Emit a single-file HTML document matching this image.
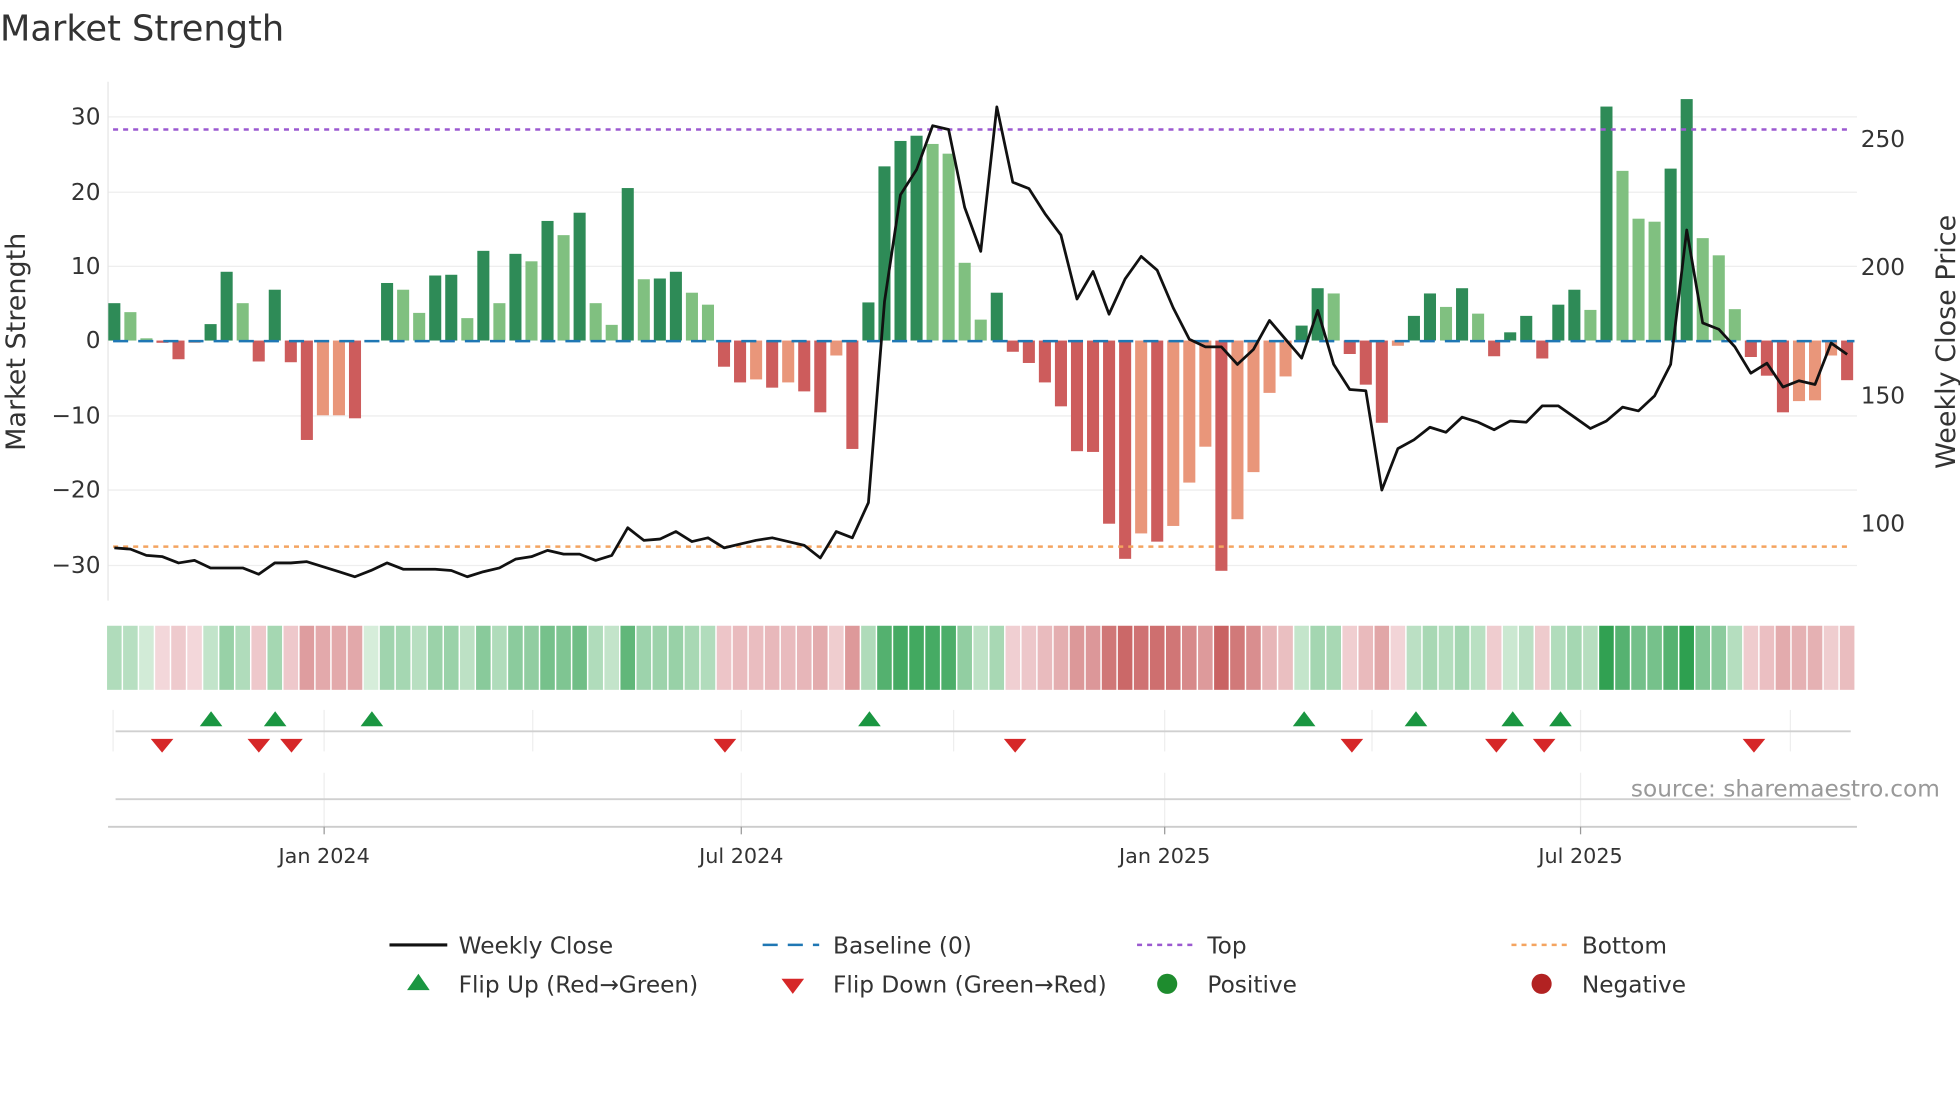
<!DOCTYPE html>
<html><head><meta charset="utf-8">
<style>
html,body{margin:0;padding:0;background:#fff;width:1960px;height:1102px;overflow:hidden}
svg{display:block}
text{font-family:"DejaVu Sans","Liberation Sans",sans-serif}
</style></head>
<body>
<svg id="s" width="1960" height="1102" viewBox="0 0 1560 877" xmlns="http://www.w3.org/2000/svg">
<text x="0" y="32" font-size="28" fill="#333">Market Strength</text>
<g stroke="#eeeeee" stroke-width="1">
<line x1="86" x2="1478" y1="93" y2="93"/><line x1="86" x2="1478" y1="153" y2="153"/>
<line x1="86" x2="1478" y1="212" y2="212"/><line x1="86" x2="1478" y1="331" y2="331"/>
<line x1="86" x2="1478" y1="390" y2="390"/><line x1="86" x2="1478" y1="450" y2="450"/>
</g>
<line x1="86" x2="86" y1="65" y2="478" stroke="#e6e6e6" stroke-width="1"/>
<g font-size="18.5" fill="#333" text-anchor="end">
<text x="80" y="99">30</text><text x="80" y="159">20</text><text x="80" y="218">10</text>
<text x="80" y="277">0</text><text x="80" y="337">−10</text><text x="80" y="396">−20</text><text x="80" y="456">−30</text>
</g>
<g font-size="18.5" fill="#333">
<text x="1481" y="117">250</text><text x="1481" y="219">200</text><text x="1481" y="321">150</text><text x="1481" y="423">100</text>
</g>
<text transform="translate(20,272) rotate(-90)" font-size="21.5" fill="#333" text-anchor="middle">Market Strength</text>
<text transform="translate(1556,272) rotate(-90)" font-size="21.5" fill="#333" text-anchor="middle">Weekly Close Price</text>
<g id="bars"></g>
<line x1="90" x2="1476" y1="271.5" y2="271.5" stroke="#1f77b4" stroke-width="2" stroke-dasharray="12 8"/>
<line x1="90" x2="1470" y1="103" y2="103" stroke="#9b59d0" stroke-width="2" stroke-dasharray="4 4"/>
<line x1="90" x2="1470" y1="435" y2="435" stroke="#f4a460" stroke-width="2" stroke-dasharray="4 4"/>
<polyline id="price" fill="none" stroke="#111" stroke-width="2.2" stroke-linejoin="round"/>
<g id="heat"></g>
<g stroke="#eeeeee" stroke-width="1">
<line x1="90" x2="90" y1="565" y2="598"/><line x1="258" x2="258" y1="565" y2="598"/><line x1="424" x2="424" y1="565" y2="598"/>
<line x1="590" x2="590" y1="565" y2="598"/><line x1="759" x2="759" y1="565" y2="598"/><line x1="927" x2="927" y1="565" y2="598"/>
<line x1="1092" x2="1092" y1="565" y2="598"/><line x1="1258" x2="1258" y1="565" y2="598"/><line x1="1425" x2="1425" y1="565" y2="598"/>
<line x1="258" x2="258" y1="615" y2="658"/><line x1="590" x2="590" y1="615" y2="658"/><line x1="927" x2="927" y1="615" y2="658"/><line x1="1258" x2="1258" y1="615" y2="658"/>
</g>
<line x1="92" x2="1473" y1="582" y2="582" stroke="#d0d0d0" stroke-width="1.5"/>
<line x1="92" x2="1473" y1="636" y2="636" stroke="#d0d0d0" stroke-width="1.5"/>
<line x1="86" x2="1478" y1="658" y2="658" stroke="#ccc" stroke-width="1.5"/>
<g stroke="#999" stroke-width="1"><line x1="258" x2="258" y1="658" y2="664"/><line x1="590" x2="590" y1="658" y2="664"/><line x1="927" x2="927" y1="658" y2="664"/><line x1="1258" x2="1258" y1="658" y2="664"/></g>
<g id="flips"></g>
<g font-size="16.5" fill="#333" text-anchor="middle">
<text x="258" y="687">Jan 2024</text><text x="590" y="687">Jul 2024</text><text x="927" y="687">Jan 2025</text><text x="1258" y="687">Jul 2025</text>
</g>
<text x="1544" y="634" font-size="18.5" fill="#999" text-anchor="end">source: sharemaestro.com</text>
<g font-size="18.5" fill="#333">
<line x1="310" x2="356" y1="752" y2="752" stroke="#111" stroke-width="2.5"/><text x="365" y="759">Weekly Close</text>
<line x1="607" x2="652" y1="752" y2="752" stroke="#1f77b4" stroke-width="2" stroke-dasharray="12 8"/><text x="663" y="759">Baseline (0)</text>
<line x1="905" x2="950" y1="752" y2="752" stroke="#9b59d0" stroke-width="2" stroke-dasharray="4 4"/><text x="961" y="759">Top</text>
<line x1="1203" x2="1248" y1="752" y2="752" stroke="#f4a460" stroke-width="2" stroke-dasharray="4 4"/><text x="1259" y="759">Bottom</text>
<polygon points="324,788 342,788 333,775" fill="#1a9641"/><text x="365" y="790">Flip Up (Red→Green)</text>
<polygon points="622,779 640,779 631,791" fill="#d62728"/><text x="663" y="790">Flip Down (Green→Red)</text>
<circle cx="929" cy="783" r="8" fill="#1e8c2e"/><text x="961" y="790">Positive</text>
<circle cx="1227" cy="783" r="8" fill="#b22222"/><text x="1259" y="790">Negative</text>
</g>
</svg>
<script>
var V=[[5,'d'],[3.8,'l'],[0.3,'l'],[-0.3,'r'],[-2.5,'r'],[-0.3,'s'],[2.2,'d'],[9.2,'d'],[5,'l'],[-2.8,'r'],[6.8,'d'],[-2.9,'r'],[-13.3,'r'],[-10,'s'],[-10,'s'],[-10.4,'r'],[0,'d'],[7.7,'d'],[6.8,'l'],[3.7,'l'],[8.7,'d'],[8.8,'d'],[3,'l'],[12,'d'],[5,'l'],[11.6,'d'],[10.6,'l'],[16,'d'],[14.1,'l'],[17.1,'d'],[5,'l'],[2.1,'l'],[20.4,'d'],[8.2,'l'],[8.3,'d'],[9.2,'d'],[6.4,'l'],[4.8,'l'],[-3.5,'r'],[-5.6,'r'],[-5.2,'s'],[-6.3,'r'],[-5.6,'s'],[-6.8,'r'],[-9.6,'r'],[-2,'s'],[-14.5,'r'],[5.1,'d'],[23.3,'d'],[26.7,'d'],[27.4,'d'],[26.3,'l'],[25,'l'],[10.4,'l'],[2.8,'l'],[6.4,'d'],[-1.5,'r'],[-3,'r'],[-5.6,'r'],[-8.8,'r'],[-14.8,'r'],[-14.9,'r'],[-24.5,'r'],[-29.2,'r'],[-25.8,'s'],[-26.9,'r'],[-24.8,'s'],[-19,'s'],[-14.2,'s'],[-30.8,'r'],[-23.9,'s'],[-17.6,'s'],[-7,'s'],[-4.8,'s'],[2,'d'],[7,'d'],[6.3,'l'],[-1.8,'r'],[-5.9,'r'],[-11,'r'],[-0.7,'s'],[3.3,'d'],[6.3,'d'],[4.5,'l'],[7,'d'],[3.6,'l'],[-2.1,'r'],[1.1,'d'],[3.3,'d'],[-2.4,'r'],[4.8,'d'],[6.8,'d'],[4.1,'l'],[31.3,'d'],[22.7,'l'],[16.3,'l'],[15.9,'l'],[23,'d'],[32.3,'d'],[13.7,'l'],[11.4,'l'],[4.2,'l'],[-2.2,'r'],[-4.7,'r'],[-9.6,'r'],[-8.1,'s'],[-8,'s'],[-2,'s'],[-5.3,'r']];
var P=[436,437,442,443,448,446,452,452,452,457,448,448,447,451,455,459,454,448,453,453,453,454,459,455,452,445,443,438,441,441,446,442,420,430,429,423,431,428,436,433,430,428,431,434,444,423,428,400,240,155,135,100,103,165,200,85,145,150,170,187,238,216,250,222,204,215,245,270,276,276,290,278,255,270,285,247,290,310,311,390,357,350,340,344,332,336,342,335,336,323,323,332,341,335,324,327,315,290,183,257,262,276,297,289,308,303,306,273,282];
var C={d:'#2e8b57',l:'#80c080',r:'#cd5c5c',s:'#e9967a'};
var NS='http://www.w3.org/2000/svg';
function el(t,a,p){var e=document.createElementNS(NS,t);for(var k in a)e.setAttribute(k,a[k]);document.getElementById(p).appendChild(e);}
function mix(a,b,t){var r=[];for(var i=0;i<3;i++)r.push(Math.round(a[i]+(b[i]-a[i])*t));return 'rgb('+r.join(',')+')';}
var pts=[];
for(var i=0;i<V.length;i++){
 var x=91+12.77*i,v=V[i][0],y0=271,h=Math.abs(v)*5.95;
 if(h>0.3)el('rect',{x:x-4.8,y:v>0?y0-h:y0,width:9.6,height:h,fill:C[V[i][1]]},'bars');
 var t=Math.min(Math.abs(v)/32,1);t=Math.pow(t,0.8);
 var col=v>=0?mix([214,237,218],[46,160,80],t):mix([244,218,221],[200,95,95],t);
 el('rect',{x:x-5.8,y:498,width:11.6,height:51,fill:col},'heat');
 pts.push(x.toFixed(1)+','+P[i]);
}
document.getElementById('price').setAttribute('points',pts.join(' '));
[168,219,296,692,1038,1127,1204,1242].forEach(function(x){el('polygon',{points:(x-9)+',578 '+(x+9)+',578 '+x+',566',fill:'#1a9641'},'flips');});
[129,206,232,577,808,1076,1191,1229,1396].forEach(function(x){el('polygon',{points:(x-9)+',588 '+(x+9)+',588 '+x+',599',fill:'#d62728'},'flips');});
</script>
</body></html>
